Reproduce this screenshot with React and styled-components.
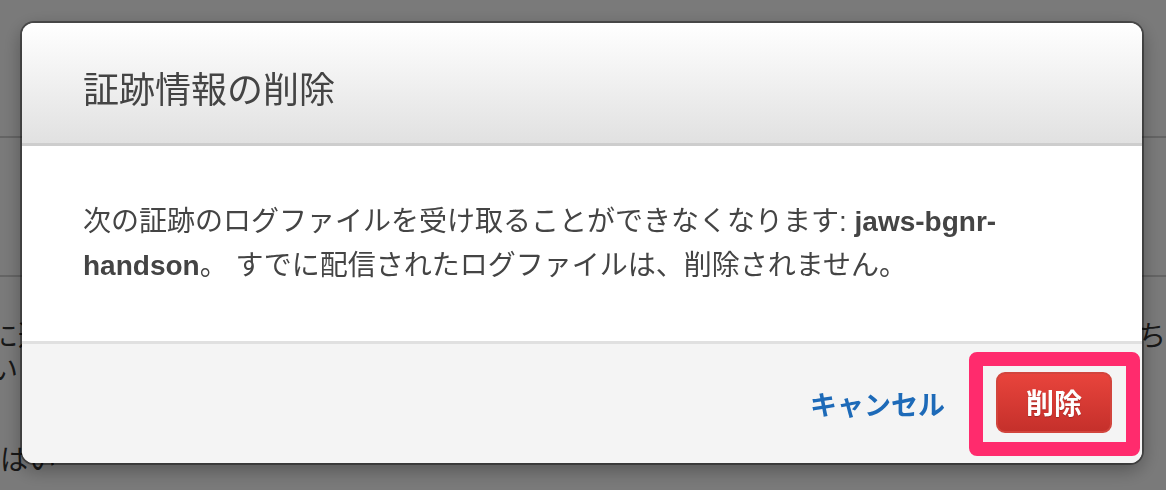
import React from 'react'
import styled, { createGlobalStyle } from 'styled-components'

const GlobalStyle = createGlobalStyle`
  html, body {
    margin: 0;
    padding: 0;
    width: 1166px;
    height: 490px;
    overflow: hidden;
    background: #fff;
    font-family: "Liberation Sans", "Noto Sans CJK JP", sans-serif;
  }
`

export default function App() {
  return (
    <>
      <GlobalStyle />
      <Page>
        <PageSection height={136} />
        <PageSection height={137} />
        <PageText>
          <Row><span className='cut'>に近</span><span>ち</span></Row>
          <Row><span className='cut'>います</span></Row>
          <Row className='last'><span>はい</span></Row>
        </PageText>
      </Page>
      <Backdrop />
      <Dialog role='dialog'>
        <Header>
          <Title>証跡情報の削除</Title>
        </Header>
        <Body>
          <Message>
            次の証跡のログファイルを受け取ることができなくなります: <b>jaws-bgnr-handson</b>。 すでに配信されたログファイルは、削除されません。
          </Message>
        </Body>
        <Footer>
          <CancelLink type='button'>キャンセル</CancelLink>
          <Highlight>
            <DeleteButton type='button'>削除</DeleteButton>
          </Highlight>
        </Footer>
      </Dialog>
    </>
  )
}

const Page = styled.div`
  width: 1166px;
  height: 490px;
  background: #fff;
  color: #333;
  font-family: "Noto Sans CJK JP", sans-serif;
`

const PageSection = styled.div`
  height: ${p => p.height}px;
  border-bottom: 2px solid #d2d2d2;
`

const PageText = styled.div`
  display: flex;
  flex-direction: column;
  padding-top: 40px;
  font-size: 28px;
  line-height: 34px;
`

const Row = styled.div`
  display: flex;
  justify-content: space-between;
  height: 34px;
  .cut { margin-left: -10px; }
  &.last { margin-top: 56px; }
`

const Backdrop = styled.div`
  position: fixed;
  inset: 0;
  background: rgba(0, 0, 0, 0.52);
`

const Dialog = styled.div`
  position: fixed;
  left: 22px;
  top: 23px;
  width: 1120px;
  height: 440px;
  display: flex;
  flex-direction: column;
  background: #fff;
  border-radius: 12px;
  overflow: hidden;
  box-shadow: 0 0 0 2px rgba(0, 0, 0, 0.38), 0 6px 20px rgba(0, 0, 0, 0.35);
`

const Header = styled.div`
  height: 123px;
  box-sizing: border-box;
  display: flex;
  align-items: center;
  padding: 8px 61px 0;
  background: linear-gradient(to bottom, #ffffff 0%, #e1e1e1 100%);
  border-bottom: 3px solid #cdcdcd;
`

const Title = styled.h2`
  margin: 0;
  font-size: 36px;
  font-weight: 400;
  line-height: 44px;
  color: #444;
  font-family: "Noto Sans CJK JP", sans-serif;
`

const Body = styled.div`
  height: 198px;
  box-sizing: border-box;
  padding: 54px 60px 0 61px;
  border-bottom: 3px solid #e0e0e0;
`

const Message = styled.p`
  margin: 0;
  font-size: 28px;
  line-height: 44px;
  color: #444;
  font-family: "Liberation Sans", "Noto Sans CJK JP", sans-serif;

  b {
    font-weight: 700;
  }
`

const Footer = styled.div`
  flex: 1;
  display: flex;
  align-items: center;
  justify-content: flex-end;
  gap: 24px;
  padding: 0 2px 0 0;
  background: #f4f4f4;
`

const CancelLink = styled.button`
  border: none;
  background: none;
  padding: 0;
  font-family: "Noto Sans CJK JP", sans-serif;
  font-size: 27px;
  font-weight: 700;
  color: #1d6ab8;
  cursor: pointer;
`

const Highlight = styled.div`
  border: 14px solid #ff2b6d;
  border-radius: 8px;
  padding: 6px 14px 9px 13px;
`

const DeleteButton = styled.button`
  display: block;
  width: 116px;
  height: 61px;
  border: 2px solid #d2453d;
  border-radius: 9px;
  background: linear-gradient(to bottom, #e8443c 0%, #c5302b 100%);
  color: #fff;
  font-family: "Noto Sans CJK JP", sans-serif;
  font-size: 28px;
  font-weight: 700;
  text-shadow: 0 1px 1px rgba(0, 0, 0, 0.25);
  cursor: pointer;
`
